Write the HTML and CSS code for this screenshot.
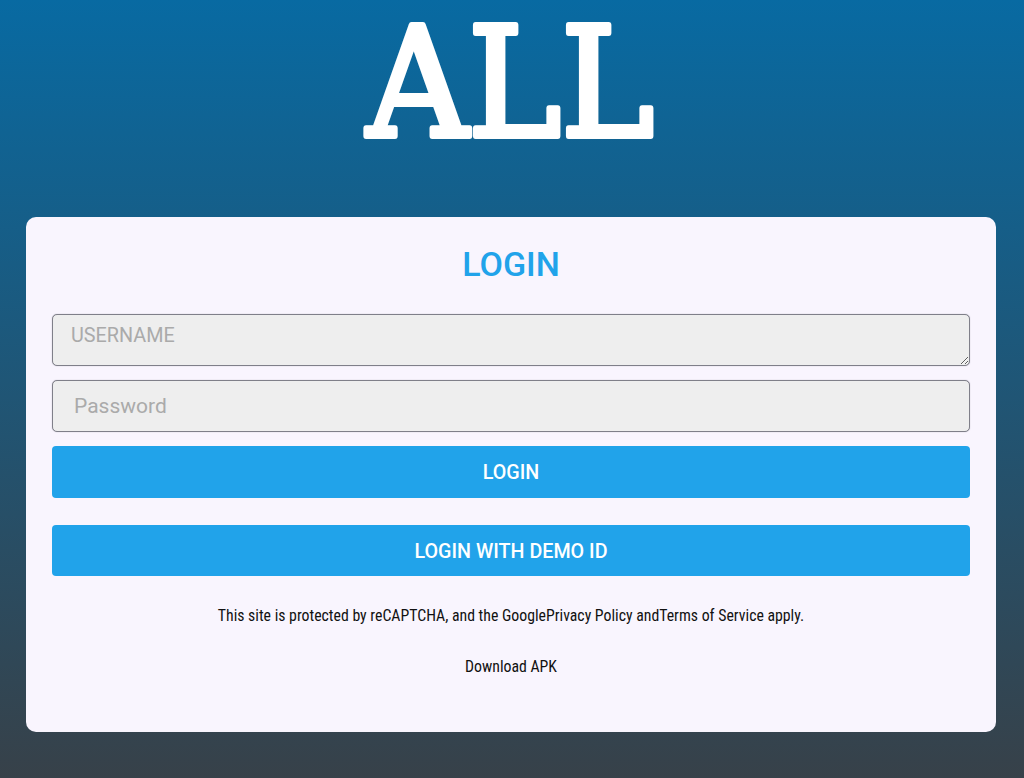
FILE: index.html
```html
<!DOCTYPE html>
<html lang="en">
<head>
<meta charset="utf-8">
<title>Login</title>
<link rel="stylesheet" href="styles.css">
</head>
<body>
<header class="logo-bar">
  <svg class="logo" width="320" height="170" viewBox="0 0 320 170">
    <text class="logo-text" x="16" y="136" textLength="287" lengthAdjust="spacingAndGlyphs">ALL</text>
  </svg>
</header>
<main class="card">
  <h1 class="title">LOGIN</h1>
  <form class="form">
    <textarea class="field field-user" placeholder="USERNAME"></textarea>
    <input class="field field-pass" type="password" placeholder="Password">
    <button class="btn" type="button">LOGIN</button>
    <button class="btn btn-demo" type="button">LOGIN WITH DEMO ID</button>
  </form>
  <p class="note">This site is protected by reCAPTCHA, and the GooglePrivacy Policy andTerms of Service apply.</p>
  <p class="download">Download APK</p>
</main>
</body>
</html>
```
FILE: styles.css
```css
* { box-sizing: border-box; }
html, body { height: 100%; }
body {
  margin: 0;
  height: 778px;
  overflow: hidden;
  padding: 0 28px 0 26px;
  background: linear-gradient(180deg, #086aa2 0%, #374149 100%);
  font-family: Roboto, "Liberation Sans", sans-serif;
  display: flex;
  flex-direction: column;
}
.logo-bar { height: 217px; display: flex; justify-content: center; flex: none; }
.logo { display: block; }
.logo-text {
  font-family: "DejaVu Serif", serif;
  font-weight: 400;
  font-size: 152px;
  fill: #fff;
  stroke: #fff;
  stroke-width: 6px;
  stroke-linejoin: round;
}
.card {
  height: 515px;
  flex: none;
  background: #f9f5fe;
  border-radius: 10px;
  padding: 26px 26px 0;
  text-align: center;
}
.title {
  margin: 0 0 28px;
  height: 43px;
  font-size: 34px;
  line-height: 43px;
  font-weight: 500;
  color: #21a3ea;
}
.form { display: flex; flex-direction: column; }
.field {
  display: block;
  width: 100%;
  height: 52px;
  background: #eeeeee;
  border: 1px solid #7f7f89;
  border-radius: 5px;
  box-shadow: 0 0 1px rgba(127, 127, 137, 0.7);
  margin: 0 0 14px;
  font-family: Roboto, sans-serif;
  color: #333;
  outline: none;
}
.field::placeholder { color: #aaaaaa; opacity: 1; }
.field-user { padding: 9px 18px; font-size: 19.8px; line-height: 24px; resize: vertical; }
.field-pass { padding: 0 21px; font-size: 21px; }
.btn {
  height: 52px;
  border: 0;
  border-radius: 4px;
  background: #21a3ea;
  color: #fff;
  font-family: Roboto, sans-serif;
  font-size: 19.7px;
  font-weight: 500;
  padding: 1px 0 0;
}
.btn-demo { margin-top: 27px; height: 51px; }
.note, .download {
  margin: 0;
  font-family: Roboto, sans-serif;
  font-size: 15.8px;
  font-stretch: 75%;
  line-height: 20px;
  color: #111;
}
.note { margin-top: 30px; }
.download { margin-top: 31px; }
```
